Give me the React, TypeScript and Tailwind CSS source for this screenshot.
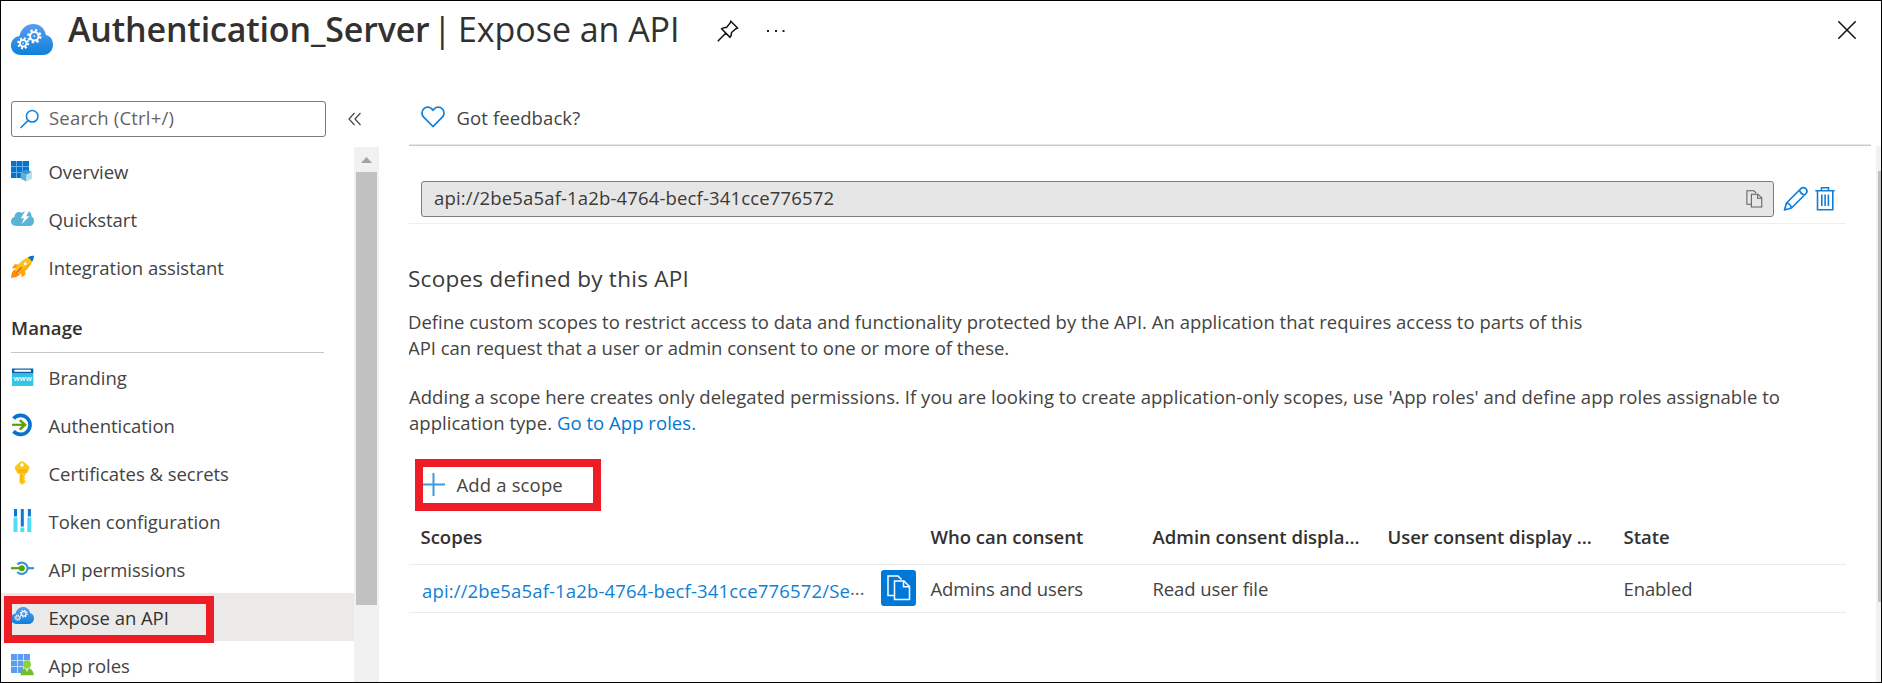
import type { ReactNode } from "react";

const Teeth = ({ cx, cy, r, w }: { cx: number; cy: number; r: number; w: number }) => {
  const len = 2 * Math.PI * r;
  return (
    <g fill="none" stroke="#fff">
      <circle cx={cx} cy={cy} r={r} strokeWidth={w * 1.2} strokeDasharray={`${len / 16} ${len / 16}`} />
      <circle cx={cx} cy={cy} r={r - w * 0.9} strokeWidth={w} />
      <circle cx={cx} cy={cy} r={0.9} fill="#d5e8fa" stroke="none" />
    </g>
  );
};

const CloudGears = ({ className, id }: { className: string; id: string }) => (
  <svg viewBox="0 0 42 31" className={className} preserveAspectRatio="none">
    <defs>
      <linearGradient id={id} x1="0" y1="0" x2="0" y2="1">
        <stop offset="0" stopColor="#5a9dee" />
        <stop offset="1" stopColor="#1080dc" />
      </linearGradient>
    </defs>
    <path
      d="M10 31C4 31 0 27 0 21.5C0 16.5 3.500 12.700 8.500 12C10 4.500 15.500 0 22.500 0C29 0 33.500 4.300 35 11C39.500 12 42 15.800 42 20.500C42 26.500 38 31 32 31Z"
      fill={`url(#${id})`}
    />
    <Teeth cx={23.3} cy={12.2} r={6} w={2} />
    <Teeth cx={12.2} cy={19.3} r={4.9} w={1.8} />
  </svg>
);

const box = "h-6 w-6 shrink-0";

const OverviewIcon = () => (
  <svg viewBox="0 0 24 24" className={box}>
    <rect x="0" y="2" width="18" height="17" fill="#5fb0ec" />
    <path d="M0 2h5v5H0zM6 2h5v5H6zM12 2h6v5h-6zM0 8h5v5H0zM6 8h5v5H6zM12 8h6v5h-6zM0 14h5v5H0zM6 14h5v5H6z" fill="#0672cb" />
    <path d="M9.800 13L15.300 10.500L21 13L15.300 15.500Z" fill="#3999c6" />
    <path d="M9.800 13L15.300 15.500V22.500L9.800 19.800Z" fill="#59b4d9" />
    <path d="M21 13L15.300 15.500V22.500L21 19.800Z" fill="#b8dff0" />
  </svg>
);

const QuickstartIcon = () => (
  <svg viewBox="0 0 24 24" className={box}>
    <path d="M5 19C2 19 0 17 0 14.300C0 12 1.500 10.300 3.500 9.900C3.500 6.700 5.500 5 8.300 5C9.500 5 10.300 5.300 11.200 5.900C12.300 4.700 14 4 15.800 4C19 4 20.600 6 20.600 9.500C22.300 10.300 23 12 23 14C23 17 21 19 18 19Z" fill="#59b4d9" />
    <path d="M14.800 3L9.800 11.300H13L10.600 17.300L18.500 9.200H15.200L18.500 3Z" fill="#fff" />
  </svg>
);

const RocketIcon = () => (
  <svg viewBox="0 0 24 24" className={box}>
    <path d="M8.500 9.500L3.500 9.200L.800 13.500L6.500 13ZM14 15.500L14.500 19.500L10.500 22.500L10.300 17Z" fill="#ff9a1f" />
    <path d="M3.500 14.500C1.200 16 .300 19 0 23C4 22.500 7 21.700 8.800 19.500Z" fill="#ff8c00" />
    <path d="M4 14.500C7 9 12 4 18 1.800L21.500 5.500C19.500 11 14.500 16.500 9 19.500Z" fill="#fcc41a" />
    <path d="M7 16.500C12 14.500 17.500 10 21.500 5.500C19.500 11 14.500 16.500 9 19.500Z" fill="#ffa800" />
    <path d="M17 2.200C19 1.200 21 .800 23 .800C22.900 2.800 22.300 4.800 21.200 6.600Z" fill="#0b6fc6" />
    <circle cx="14.300" cy="8.700" r="2" fill="#fff" stroke="#f5a623" strokeWidth=".700" />
    <path d="M5.500 17.500L10.500 12.500" stroke="#e8622c" strokeWidth="1.700" strokeLinecap="round" />
  </svg>
);

const BrandingIcon = () => (
  <svg viewBox="0 0 24 24" className={box}>
    <defs>
      <linearGradient id="brand" x1="0" y1="0" x2="0" y2="1">
        <stop offset="0" stopColor="#34b8e6" />
        <stop offset="1" stopColor="#2fcbe8" />
      </linearGradient>
    </defs>
    <rect x="1" y="7" width="21.300" height="14" rx=".600" fill="url(#brand)" />
    <path d="M1 3.500h21.300V8H1z" fill="#0a5fa8" />
    <rect x="3.300" y="4.800" width="16.700" height="1.900" rx=".500" fill="#fff" />
    <text x="11.600" y="16.300" textAnchor="middle" fill="#fff" className="text-[7.5px] font-semibold">
      www
    </text>
  </svg>
);

const AuthIcon = () => (
  <svg viewBox="0 0 24 24" className={box}>
    <path d="M2.500 5.500A9.500 9.500 0 1 1 2.500 18.300" fill="none" stroke="#0a72cc" strokeWidth="3.600" />
    <path d="M1 11.800H14.500" stroke="#57a300" strokeWidth="2.200" />
    <path d="M8.800 7.100L14 11.800L8.800 16.500" fill="none" stroke="#57a300" strokeWidth="2.500" />
  </svg>
);

const KeyIcon = () => (
  <svg viewBox="0 0 24 24" className={box}>
    <path d="M9.300 .700Q11 -.300 12.700 .700L17.500 4.800Q18.800 6 18.300 7.500L16.500 11.500Q15.800 12.500 14.300 13V14.500L13 15.800L14.300 17.200L13 18.500L14.300 19.800V21.500L11 23.700L8.500 21.500V13Q6.500 12.500 5.800 11.500L4 7.500Q3.500 6 4.700 4.800Z" fill="#fdc718" />
    <path d="M6.700 9.200h8.800M6.700 10.900h8.800" stroke="#f0a30a" strokeWidth=".800" />
    <path d="M10.400 14v7" stroke="#f0a30a" strokeWidth=".900" />
    <circle cx="11" cy="4" r="1.700" fill="#fff" />
  </svg>
);

const TokenIcon = () => (
  <svg viewBox="0 0 24 24" className={box}>
    <path d="M2.500 8.500h4V23h-4zM9.300 18.500h4V23h-4zM16.300 8.500h4V23h-4z" fill="#50dcf5" />
    <path d="M3 0h3v7.500H3zM9.800 0h3v17.500h-3zM16.900 0h3v7.500h-3z" fill="#0a78d4" />
  </svg>
);

const PermissionIcon = () => (
  <svg viewBox="0 0 24 24" className={box}>
    <path d="M6.300 7.500A6 6 0 0 1 16.600 11.200A6 6 0 0 1 6.300 15" fill="none" stroke="#3a96d2" strokeWidth="2.200" />
    <path d="M17 11.200H23" stroke="#3a96d2" strokeWidth="2.200" />
    <path d="M0 11.200H10" stroke="#57a300" strokeWidth="2.200" />
    <circle cx="10.800" cy="11.200" r="3" fill="#57a300" />
  </svg>
);

const RolesIcon = () => (
  <svg viewBox="0 0 24 24" className={box}>
    <rect x="0" y="1" width="19" height="19" fill="#c4dcfc" />
    <path d="M0 1h6v6H0zM7 1h5v6H7zM13 1h6v6h-6zM0 8h6v5H0zM7 8h5v5H7zM13 8h6v5h-6zM0 14h6v6H0zM7 14h5v6H7z" fill="#5b9df0" />
    <path d="M9.500 22.300C9.800 18 12 15 16 15S22.500 18 22.800 22.300Z" fill="#76bc2d" />
    <circle cx="16" cy="11.300" r="3.900" fill="#86d633" />
    <path d="M14 15.200L16 19L18 15.200Z" fill="#d7f2b4" />
  </svg>
);

const CopyIcon = ({ className }: { className: string }) => (
  <svg viewBox="0 0 24 26" className={className} fill="none" stroke="currentColor" strokeWidth="1.500">
    <path d="M7.500 20.500H1V1H11L14.500 4.500" />
    <path d="M7.500 6H17L22.500 11.500V24.500H7.500Z" />
    <path d="M16.500 6V11.800H22.500" />
  </svg>
);

type Item = { label: string; icon: ReactNode; active?: boolean };

const topItems: Item[] = [
  { label: "Overview", icon: <OverviewIcon /> },
  { label: "Quickstart", icon: <QuickstartIcon /> },
  { label: "Integration assistant", icon: <RocketIcon /> },
];

const manageItems: Item[] = [
  { label: "Branding", icon: <BrandingIcon /> },
  { label: "Authentication", icon: <AuthIcon /> },
  { label: "Certificates & secrets", icon: <KeyIcon /> },
  { label: "Token configuration", icon: <TokenIcon /> },
  { label: "API permissions", icon: <PermissionIcon /> },
  {
    label: "Expose an API",
    icon: (
      <span className="flex h-6 w-6 shrink-0 items-start pt-[2px]">
        <CloudGears id="cloudSmall" className="h-[17px] w-[23px]" />
      </span>
    ),
    active: true,
  },
  { label: "App roles", icon: <RolesIcon /> },
];

const NavRow = ({ item }: { item: Item }) => (
  <li className={`relative flex h-12 shrink-0 items-center pl-[10px] ${item.active ? "bg-[#ebeae9]" : ""}`}>
    {item.icon}
    <span className={`pt-[2px] pl-[13.5px] tracking-[-0.04px] ${item.active ? "text-[#323130]" : ""}`}>{item.label}</span>
    {item.active && <span className="absolute top-[3px] left-[3px] h-[47px] w-[210px] border-8 border-[#ee1c25]" />}
  </li>
);

const Sidebar = () => (
  <aside className="flex w-[378px] shrink-0 flex-col">
    <div className="mt-[22px] flex h-9 shrink-0 items-center pl-[10px]">
      <div className="flex h-9 w-[315px] items-center rounded-[3px] border border-[#7d7b79] pl-2">
        <svg viewBox="0 0 20 20" className="h-5 w-5" fill="none" stroke="#0f7fd8" strokeWidth="1.500">
          <circle cx="12.200" cy="7.300" r="5.800" />
          <path d="M8.100 11.400L.500 19" />
        </svg>
        <span className="-mt-[2px] pl-[9px] tracking-[0.2px] text-[#666463]">Search (Ctrl+/)</span>
      </div>
      <svg viewBox="0 0 14 14" className="ml-[22px] h-[14px] w-[14px]" fill="none" stroke="#444" strokeWidth="1.200">
        <path d="M6.500 1L1 7L6.500 13M12.500 1L7 7L12.500 13" />
      </svg>
    </div>
    <div className="mt-[10px] flex h-[535px] overflow-hidden">
      <nav className="w-[353px]">
        <ul>
          {topItems.map((item) => (
            <NavRow key={item.label} item={item} />
          ))}
        </ul>
        <div className="ml-[10px] h-[62px] w-[313px] pt-6">
          <h2 className="h-[38px] border-b border-[#c8c6c4] leading-[26px] font-semibold tracking-[0.1px] text-[#323130]">Manage</h2>
        </div>
        <ul>
          {manageItems.map((item) => (
            <NavRow key={item.label} item={item} />
          ))}
        </ul>
      </nav>
      <div className="flex w-[25px] flex-col items-center bg-[#f1f1f1]">
        <svg viewBox="0 0 25 25" className="h-[25px] w-[25px]">
          <path d="M7 16L12.500 10L18 16Z" fill="#a3a3a3" />
        </svg>
        <div className="h-[433px] w-[21px] bg-[#c1c1c1]" />
      </div>
    </div>
  </aside>
);

const Header = () => (
  <header className="flex h-[78px] shrink-0 items-start">
    <CloudGears id="cloudLarge" className="mt-[23px] ml-[10px] h-[31px] w-[42px]" />
    <h1 className="ml-[15px] flex text-[34px] leading-[56px] text-[#323130]">
      <span className="w-[365px] font-semibold tracking-[-0.16px]">Authentication_Server</span>
      <span className="w-[25px]">|</span>
      <span className="tracking-[-0.05px]">Expose an API</span>
    </h1>
    <svg viewBox="0 0 22 22" className="mt-[19px] ml-[38px] h-[22px] w-[22px]" fill="none" stroke="#111" strokeWidth="1.500" strokeLinejoin="miter">
      <path d="M13.800 1.300L20.500 8L19 8.700L14.500 12.500Q14.700 15.500 13 17.300L4.600 8.900Q6.500 7.200 9.500 7.500L13.200 3ZM8.700 13.200L.800 21.200" />
    </svg>
    <svg viewBox="0 0 18 4" className="mt-[28px] ml-[28px] h-1 w-[18px]" fill="#222">
      <path d="M0 1h2v2H0zM8 1h2v2H8zM15.500 1h2v2h-2z" />
    </svg>
    <svg viewBox="0 0 18 18" className="mt-5 mr-[25px] ml-auto h-[18px] w-[18px]" stroke="#111" strokeWidth="1.500">
      <path d="M.300 .300L17.700 17.700M17.700 .300L.300 17.700" />
    </svg>
  </header>
);

const columns = "grid grid-cols-[510px_222px_235px_236px_1fr] pl-[11.5px]";

const Content = () => (
  <div className="flex w-[1437px] flex-col">
    <div className="mt-[35px] flex h-[43px] shrink-0 items-start border-b border-[#f0efee] pl-3">
      <div className="flex h-9 w-[1353px] items-center rounded-[3px] border border-[#7f7d7b] bg-[#e6e6e6] pr-[10px] pl-3 text-[#3b3a39]">
        <span className="-mt-[3px] tracking-[0.15px]">api://2be5a5af-1a2b-4764-becf-341cce776572</span>
        <CopyIcon className="ml-auto h-[18px] w-[17px] text-[#605e5c]" />
      </div>
      <svg viewBox="0 0 25 25" className="mt-[5px] ml-[8.5px] h-[25px] w-[25px]" fill="none" stroke="#0f7fd8" strokeWidth="1.700" strokeLinejoin="round">
        <path d="M1.500 24L3.500 17L18 2.500Q20.500 .500 22.800 2.700Q25 5 23 7.500L8.500 22ZM3.500 17Q7.500 17.500 8.500 22M16.500 4Q17.500 8 21.500 9" />
      </svg>
      <svg viewBox="0 0 20 25" className="mt-[5px] ml-[7.5px] h-[25px] w-5" fill="none" stroke="#0f7fd8" strokeWidth="1.600">
        <path d="M.300 4.800H19.700M6.500 4.500V1.800H13.500V4.500M2.500 5V23.800H17.800V5M6.800 8.500V20M10.100 8.500V20M13.400 8.500V20" />
      </svg>
    </div>
    <h2 className="mt-[39px] -ml-px text-[22.500px] leading-8 tracking-[0.26px] text-[#3b3a39]">Scopes defined by this API</h2>
    <p className="mt-[14px] -ml-px leading-[26px]">
      Define custom scopes to restrict access to data and functionality protected by the API. An application that requires access to parts of this
      <br />
      <span className="tracking-[-0.02px]">API can request that a user or admin consent to one or more of these.</span>
    </p>
    <p className="mt-[23px] leading-[26px]">
      <span className="tracking-[0.04px]">
        Adding a scope here creates only delegated permissions. If you are looking to create application-only scopes, use 'App roles' and define app
        roles assignable to
      </span>
      <br />
      <span className="tracking-[0.04px]">
        application type. <a className="text-[#0078d4]">Go to App roles.</a>
      </span>
    </p>
    <div className="relative mt-[23px] flex h-[52px] shrink-0 items-center pl-[13px]">
      <svg viewBox="0 0 23 24" className="h-6 w-[23px]" stroke="#3c9ae0" strokeWidth="2">
        <path d="M0 11.500H23M11.500 0V23" />
      </svg>
      <span className="pl-[11.500px] tracking-[0.15px]">Add a scope</span>
      <span className="absolute top-0 left-[6px] h-[52px] w-[186px] border-8 border-[#ee1c25]" />
    </div>
    <div className={`${columns} h-[54px] shrink-0 border-b border-[#edebe9] pt-[13px] leading-[26px] font-semibold text-[#323130]`}>
      <span>Scopes</span>
      <span>Who can consent</span>
      <span>Admin consent displa...</span>
      <span className="tracking-[-0.03px]">User consent display ...</span>
      <span>State</span>
    </div>
    <div className={`${columns} h-12 shrink-0 border-b border-[#edebe9] leading-[26px]`}>
      <span className="flex">
        <a className="ml-[1.5px] pt-[13px] tracking-[0.15px] text-[#0f7fd8]">api://2be5a5af-1a2b-4764-becf-341cce776572/Se</a>
        <span className="pt-[10px] text-[#605e5c]">...</span>
        <span className="mt-[5px] mr-[14.5px] ml-auto flex h-9 w-[35px] items-center justify-center rounded-[3px] bg-[#0078d7]">
          <CopyIcon className="h-[26px] w-6 text-white" />
        </span>
      </span>
      <span className="pt-[11px] tracking-[-0.12px]">Admins and users</span>
      <span className="pt-[11px] tracking-[-0.1px]">Read user file</span>
      <span />
      <span className="pt-[11px] tracking-[-0.1px]">Enabled</span>
    </div>
    <h2 className="mt-[61px] text-[22.500px] leading-8 tracking-[0.26px] text-[#3b3a39]">Authorized client applications</h2>
  </div>
);

export default function App() {
  return (
    <div className="flex h-[683px] w-[1882px] flex-col overflow-hidden border border-black bg-white font-['Open_Sans','Noto_Sans',sans-serif] text-[18.5px] text-[#444342]">
      <Header />
      <div className="flex h-[603px] shrink-0">
        <Sidebar />
        <main className="ml-[30px] flex w-[1472px] flex-col">
          <div className="mr-[10px] flex h-[67px] shrink-0 items-start border-b border-[#c9c8c7]">
            <div className="flex h-[66px] w-full items-start border-b border-[#e8e8e8] pl-3">
              <svg viewBox="0 0 24 22" className="mt-[26.500px] h-[22px] w-6" fill="none" stroke="#0f7fd8" strokeWidth="1.700">
                <path d="M12 20.500L2.700 11.200C.400 8.800 .400 5 2.700 2.800C5 .500 8.500 .500 10.700 2.800L12 4.200L13.300 2.800C15.500 .500 19 .500 21.300 2.800C23.600 5 23.600 8.800 21.300 11.200Z" />
              </svg>
              <span className="pt-[26px] pl-[11.500px] leading-[26px] tracking-[0.1px]">Got feedback?</span>
            </div>
          </div>
          <div className="flex h-[536px] justify-between overflow-hidden">
            <Content />
            <div className="flex w-[5px] flex-col bg-[#f1f1f1] pt-[25px] pl-[2px]">
              <div className="h-[431px] w-[3px] bg-[#c1c1c1]" />
            </div>
          </div>
        </main>
      </div>
    </div>
  );
}
